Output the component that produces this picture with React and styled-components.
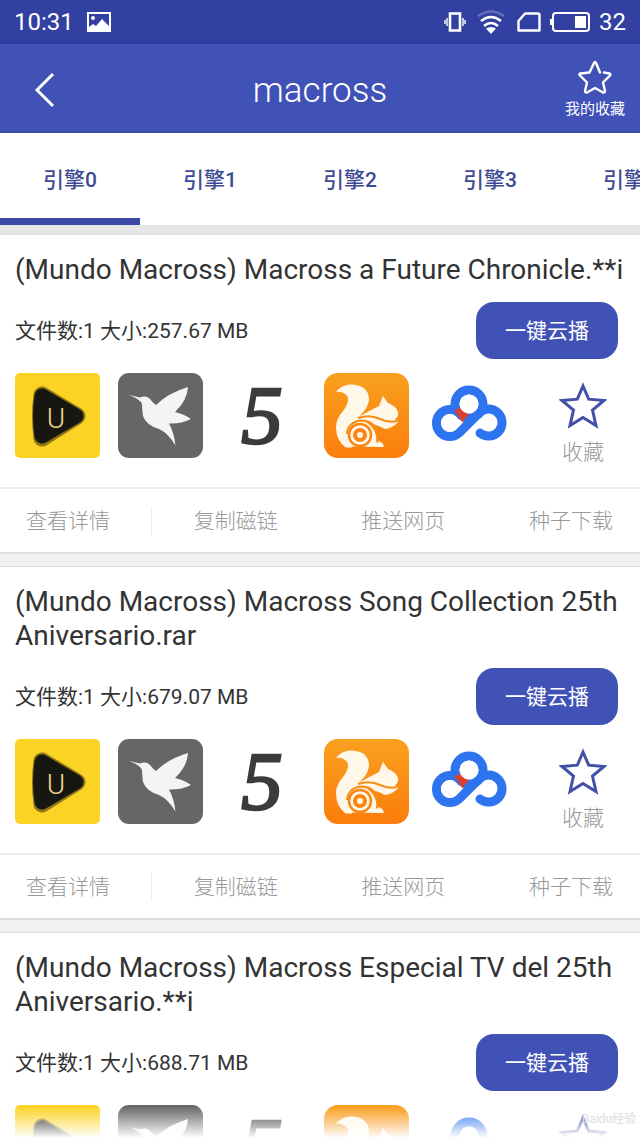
import React, { useState } from 'react';
import styled, { createGlobalStyle } from 'styled-components';

const GlobalStyle = createGlobalStyle`
  * {
    box-sizing: border-box;
  }

  body {
    margin: 0;
    background-color: #ffffff;
    font-family: Roboto, 'Noto Sans CJK SC', sans-serif;
    color: #333333;
  }

  button {
    padding: 0;
    border: none;
    background: none;
    font-family: inherit;
    cursor: pointer;
  }
`;

const Screen = styled.div`
  position: relative;
  display: flex;
  flex-direction: column;
  height: 100vh;
  overflow: hidden;
`;

const StatusBar = styled.div`
  display: flex;
  flex-shrink: 0;
  align-items: center;
  justify-content: space-between;
  height: 44px;
  padding: 3px 14px 0;
  background-color: #3140a1;
  border-bottom: 3px solid #2f3c9c;
  color: #ffffff;
  font-size: 24px;
`;

const StatusGroup = styled.div`
  display: flex;
  align-items: center;
  gap: ${({ $gap }) => $gap}px;
`;

const Header = styled.header`
  display: grid;
  flex-shrink: 0;
  grid-template-columns: 90px 1fr 90px;
  align-items: center;
  height: 89px;
  background-color: #4152b7;
  border-bottom: 2px solid #3a49a8;
  color: #ffffff;
`;

const Title = styled.h1`
  margin: 0;
  padding-top: 6px;
  font-size: 35px;
  font-weight: 300;
  text-align: center;
`;

const HeaderButton = styled.button`
  display: flex;
  flex-direction: column;
  align-items: center;
  justify-content: center;
  gap: 4px;
  padding-top: 4px;
  color: #ffffff;
  font-size: 15px;
  line-height: 22px;
`;

const Tabs = styled.nav`
  display: flex;
  flex-shrink: 0;
  height: 92px;
  overflow: hidden;
`;

const Tab = styled.button`
  flex: 0 0 140px;
  padding-top: 5px;
  border-bottom: 7px solid ${({ $active }) => ($active ? '#3a49a8' : 'transparent')};
  color: #3f4a94;
  font-size: 21px;
  font-weight: 500;
`;

const List = styled.main`
  flex: 1;
  min-height: 0;
  padding-top: 9px;
  overflow-y: auto;
  background-color: #f1f1f1;
  box-shadow: inset 0 9px 0 #e6e6e6;
  scrollbar-width: none;
`;

const Card = styled.article`
  margin-bottom: 12px;
  border-top: 1px solid #dedede;
  border-bottom: 2px solid #dedede;
  background-color: #ffffff;
`;

const CardBody = styled.div`
  padding: 18px 22px 29px 15px;
`;

const CardTitle = styled.h2`
  margin: 0 -16px 15px 0;
  font-size: 28px;
  font-weight: 400;
  line-height: 34px;
`;

const InfoRow = styled.div`
  display: flex;
  align-items: center;
  justify-content: space-between;
  margin-bottom: 14px;
`;

const Info = styled.p`
  margin: 0;
  padding-bottom: 4px;
  font-size: 21px;
  font-weight: 400;
`;

const PlayButton = styled.button`
  width: 142px;
  height: 57px;
  padding-bottom: 4px;
  border-radius: 18px;
  background-color: #4152b7;
  color: #ffffff;
  font-size: 21px;
`;

const AppRow = styled.div`
  display: flex;
  gap: 18px;
  height: 85px;
`;

const AppButton = styled.button`
  width: 85px;
  height: 85px;

  svg {
    display: block;
    overflow: visible;
  }
`;

const FavButton = styled.button`
  display: flex;
  flex-direction: column;
  align-items: center;
  gap: 10px;
  width: 70px;
  margin-left: auto;
  padding-top: 9px;
  color: #999999;
  font-size: 21px;
  font-weight: 300;
  line-height: 24px;

  svg {
    flex-shrink: 0;
  }
`;

const CardFooter = styled.div`
  display: flex;
  align-items: center;
  justify-content: space-between;
  height: 65px;
  padding: 0 27px 0 26px;
  border-top: 2px solid #ececec;
`;

const Divider = styled.span`
  width: 1px;
  height: 28px;
  background-color: ${({ $visible }) => ($visible ? '#eeeeee' : 'transparent')};
`;

const FooterButton = styled.button`
  color: #999999;
  font-size: 21px;
  font-weight: 300;
  line-height: 32px;
`;

const Fade = styled.div`
  position: absolute;
  right: 0;
  bottom: 0;
  left: 0;
  height: 32px;
  background: linear-gradient(rgba(255, 255, 255, 0), #ffffff);
  pointer-events: none;
`;

const Watermark = styled.div`
  position: absolute;
  right: 4px;
  bottom: 10px;
  color: #dddddd;
  font-size: 12px;
  line-height: 18px;
  pointer-events: none;
`;

const PictureIcon = () => (
  <svg width="24" height="20" viewBox="0 0 24 20">
    <path d="M1 1h22v18H1z" fill="none" stroke="#fff" strokeWidth="2" />
    <path d="M2 18v-3l4-3 3 2 6-7 7 7v4z" fill="#fff" />
    <circle cx="6" cy="6" r="2" fill="#fff" />
  </svg>
);

const VibrateIcon = () => (
  <svg width="22" height="20" viewBox="0 0 22 20" fill="none" stroke="#fff">
    <path d="M6 1.500h10v17H6z" strokeWidth="2.600" />
    <path d="M3 6v8M19 6v8M1 8v4M21 8v4" strokeWidth="1.4" />
  </svg>
);

const WifiIcon = () => (
  <svg width="33" height="24" viewBox="-2 0 33 24" fill="none" stroke="#fff" strokeWidth="2.600">
    <path d="M1 6Q14-3 27 6" opacity="0.25" />
    <path d="M4 11Q14 3 24 11" />
    <path d="M7 16Q14 10 21 16" />
    <path d="M9 18.500Q14 15.500 19 18.500L14 24z" fill="#fff" stroke="none" />
  </svg>
);

const SimIcon = () => (
  <svg width="24" height="20" viewBox="0 0 24 20">
    <path d="M8 1.500h13q1.500 0 1.500 1.500v15.500h-21V9z" fill="none" stroke="#fff" strokeWidth="2.400" strokeLinejoin="round" />
  </svg>
);

const BatteryIcon = () => (
  <svg width="40" height="20" viewBox="0 0 40 20">
    <rect x="3" y="1" width="36" height="18" rx="3" fill="none" stroke="#fff" strokeWidth="2" />
    <path d="M0 7h2v6H0zM25 4h11v12H25z" fill="#fff" />
  </svg>
);

const BackIcon = () => (
  <svg width="20" height="36" viewBox="0 0 20 36">
    <path d="M18 2L2 18l16 16" fill="none" stroke="#fff" strokeWidth="3" />
  </svg>
);

const HeaderStar = () => (
  <svg width="34" height="34" viewBox="0 0 34 34">
    <path
      d="M22 12.500L18 3q-1-2-2 0l-4.500 9.500-9 1q-2 .500-.500 2l7 7-2 8.500q0 2 2 1.500l8-4.500 8 4.500q2 .500 2-1.500L25 22.500l7-7q1-1.500-.500-2l-5.500-1"
      fill="none"
      stroke="#fff"
      strokeWidth="2.400"
      strokeLinejoin="round"
      strokeLinecap="round"
    />
  </svg>
);

const StarIcon = () => (
  <svg width="48" height="48" viewBox="0 0 48 48">
    <path
      d="M24 4l5.700 13.200 15.300 1.300-11.500 9.500 3.500 15.500L24 35.500 11 43.500 14.500 28 3 18.500l15.300-1.300z"
      fill="none"
      stroke="#4350a8"
      strokeWidth="3"
    />
  </svg>
);

const UPlayerIcon = () => (
  <svg width="85" height="85" viewBox="0 0 85 85">
    <rect width="85" height="85" rx="5" fill="#fbd324" />
    <path d="M27 22L62 43 27 65Q24 43 27 22z" stroke="#8d7418" strokeWidth="17" strokeLinejoin="round" />
    <path d="M27 23L61 43 27 63Q24 43 27 23z" fill="#171712" stroke="#171712" strokeWidth="15" strokeLinejoin="round" />
    <text x="41" y="55" textAnchor="middle" fontSize="28" fontWeight="300" fontFamily="Roboto, sans-serif" fill="#f5d98c">U</text>
  </svg>
);

const BirdIcon = () => (
  <svg width="85" height="85" viewBox="0 0 85 85">
    <rect width="85" height="85" rx="11" fill="#666666" />
    <path
      d="M11 22l11 2.500q6-2.500 10 1.500 3 4 6 6Q50 20 70 14q-1 14-13 25 9 2 16 7-10 5-22 4.500 5 9 6.500 22Q50 60 41 56q-13-4-16-13-1-8-1-12-2-5-13-9z"
      fill="#f4f4f4"
    />
  </svg>
);

const FiveIcon = () => (
  <svg width="85" height="85" viewBox="0 0 85 85">
    <text
      x="41"
      y="70"
      textAnchor="middle"
      fontSize="83"
      fontStyle="italic"
      fontFamily="'Liberation Serif', serif"
      fill="#3b3b3b"
      stroke="#3b3b3b"
      strokeWidth="2.500"
    >
      5
    </text>
  </svg>
);

const SquirrelIcon = () => (
  <svg width="85" height="85" viewBox="0 0 85 85">
    <defs>
      <linearGradient id="squirrelBg" x1="0" y1="0" x2="0" y2="1">
        <stop offset="0" stopColor="#f9a01f" />
        <stop offset="1" stopColor="#fb7d0c" />
      </linearGradient>
    </defs>
    <rect width="85" height="85" rx="14" fill="url(#squirrelBg)" />
    <path
      d="M12 19Q18 11 28 11.500q16 1 17 14 0 8-7 15-12 10-12 20l2 14h-6Q12 68 12 54q0-8 7-16 9-12 2-17-4-3-9-2z"
      fill="#fff8e8"
    />
    <path
      d="M38 42q9-5 17-9l4-10 5 7q8 3 10 9 1 5-3 7l3 3q-5 6-13 7-8-4-16-6-8-3-16-1 3-5 9-7z"
      fill="#fff8e8"
    />
    <path d="M20 73.500q4-24 16-25.500 15 2 17 20 6 0 7 6z" fill="#fff8e8" />
    <path d="M34 45q12-4 22 1 9 4 17 2M23 61q1-12 14-13.500 14 0 16 13 1 5 0 9" fill="none" stroke="#fa8b14" strokeWidth="2" />
    <circle cx="36" cy="62" r="11" fill="#fff8e8" stroke="#fa8512" strokeWidth="2.500" />
    <circle cx="36" cy="62" r="5" fill="#fff8e8" stroke="#fa8512" strokeWidth="4" />
  </svg>
);

const CloudIcon = () => (
  <svg width="85" height="85" viewBox="0 0 85 85">
    <g fill="none" stroke="#2f74ef" strokeWidth="9" strokeLinecap="round">
      <circle cx="42" cy="31" r="14" />
      <path d="M53 60A13.500 13.500 0 1 0 52 40L33 59A13.500 13.500 0 1 1 32 40" />
    </g>
    <path d="M27 37q4 0 7-4l8 9q-5 3-6 8z" fill="#d9402f" />
    <circle cx="42" cy="31" r="9.500" fill="#fff" />
    <circle cx="23" cy="50" r="9" fill="#fff" />
  </svg>
);

const tabs = ['引擎0', '引擎1', '引擎2', '引擎3', '引擎4'];

const results = [
  { title: '(Mundo Macross) Macross a Future Chronicle.**i', count: 1, size: '257.67 MB' },
  { title: '(Mundo Macross) Macross Song Collection 25th Aniversario.rar', count: 1, size: '679.07 MB' },
  { title: '(Mundo Macross) Macross Especial TV del 25th Aniversario.**i', count: 1, size: '688.71 MB' },
];

const apps = [UPlayerIcon, BirdIcon, FiveIcon, SquirrelIcon, CloudIcon];

const actions = ['查看详情', '复制磁链', '推送网页', '种子下载'];

const ResultCard = ({ title, count, size }) => (
  <Card>
    <CardBody>
      <CardTitle>{title}</CardTitle>
      <InfoRow>
        <Info>文件数:{count} 大小:{size}</Info>
        <PlayButton>一键云播</PlayButton>
      </InfoRow>
      <AppRow>
        {apps.map((Icon, index) => (
          <AppButton key={index}>
            <Icon />
          </AppButton>
        ))}
        <FavButton>
          <StarIcon />
          收藏
        </FavButton>
      </AppRow>
    </CardBody>
    <CardFooter>
      {actions.map((action, index) => (
        <React.Fragment key={action}>
          {index > 0 && <Divider $visible={index === 1} />}
          <FooterButton>{action}</FooterButton>
        </React.Fragment>
      ))}
    </CardFooter>
  </Card>
);

const App = () => {
  const [activeTab, setActiveTab] = useState(0);

  return (
    <>
      <GlobalStyle />
      <Screen>
        <StatusBar>
          <StatusGroup $gap={13}>
            <span>10:31</span>
            <PictureIcon />
          </StatusGroup>
          <StatusGroup $gap={9}>
            <VibrateIcon />
            <WifiIcon />
            <SimIcon />
            <BatteryIcon />
            <span>32</span>
          </StatusGroup>
        </StatusBar>

        <Header>
          <HeaderButton>
            <BackIcon />
          </HeaderButton>
          <Title>macross</Title>
          <HeaderButton>
            <HeaderStar />
            我的收藏
          </HeaderButton>
        </Header>

        <Tabs>
          {tabs.map((tab, index) => (
            <Tab key={tab} $active={index === activeTab} onClick={() => setActiveTab(index)}>
              {tab}
            </Tab>
          ))}
        </Tabs>

        <List>
          {results.map((result) => (
            <ResultCard key={result.title} {...result} />
          ))}
        </List>

        <Fade />
        <Watermark>Baidu经验</Watermark>
      </Screen>
    </>
  );
};

export default App;
